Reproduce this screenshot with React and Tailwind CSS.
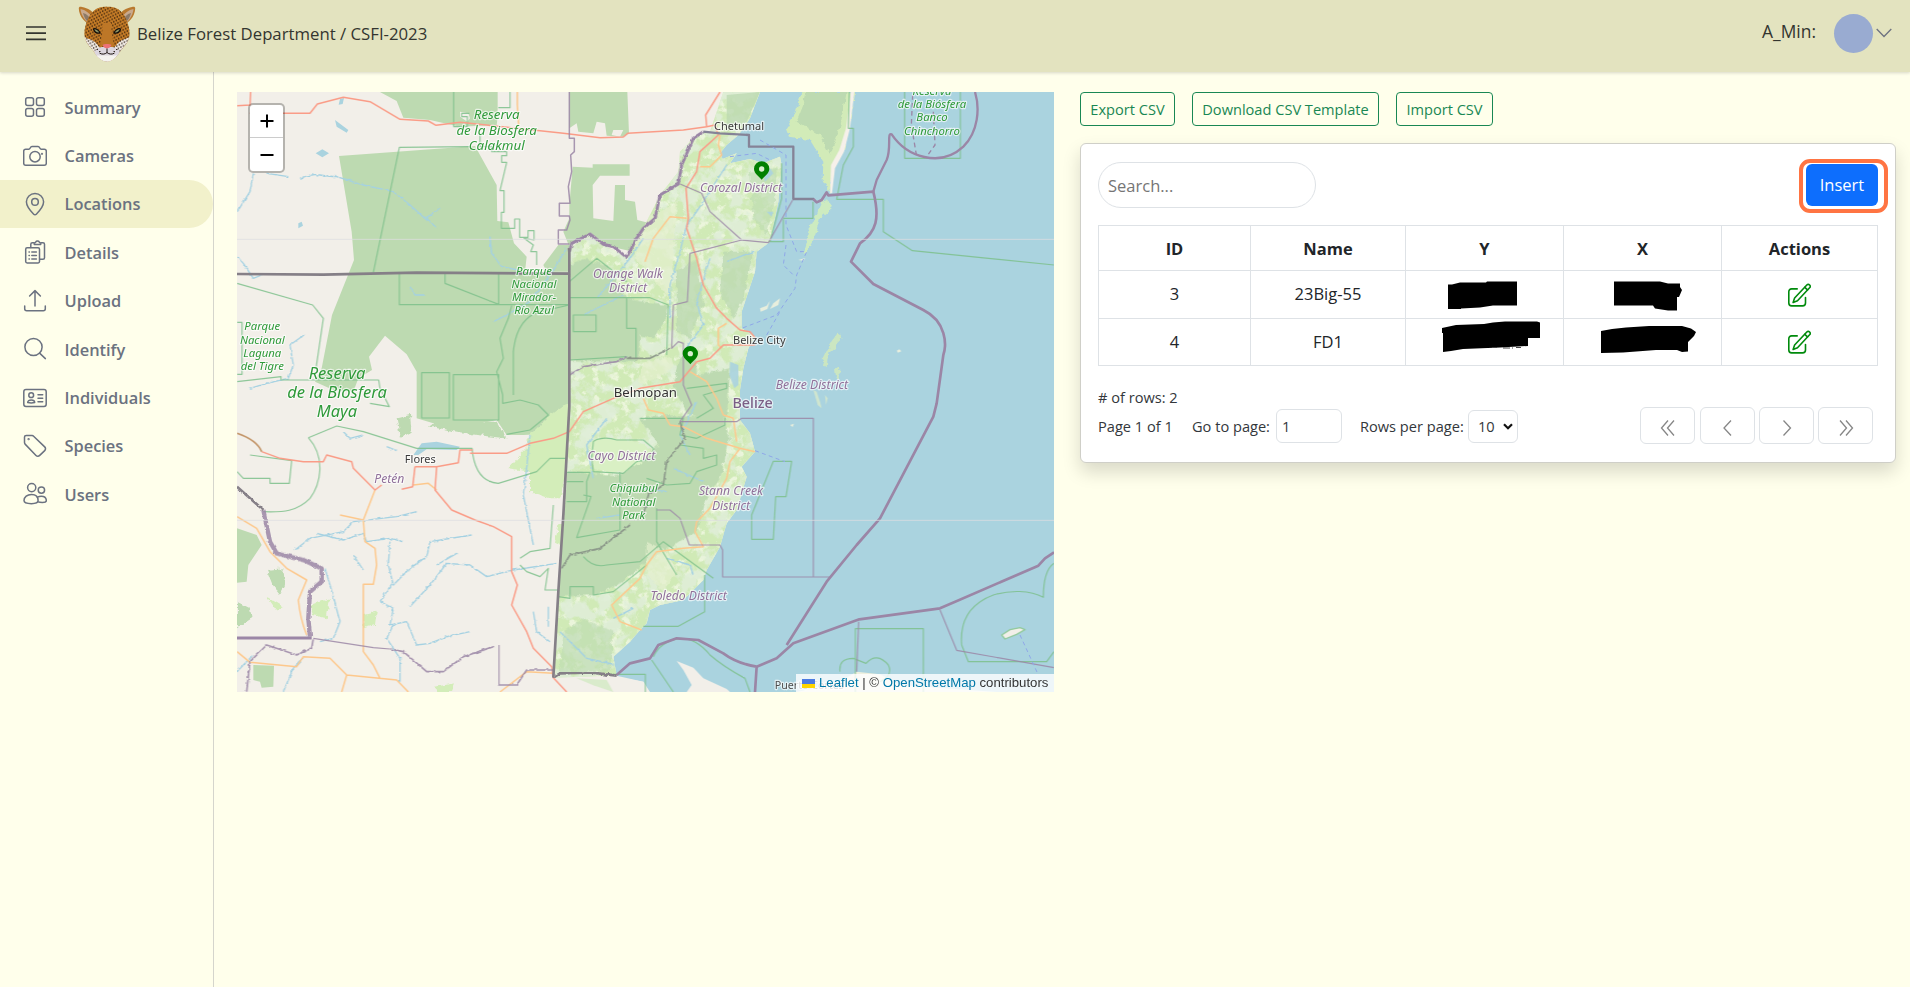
import React from "react";

const OS = "font-['Open_Sans','Noto_Sans',sans-serif]";

/* ---------- icons ---------- */
function Icon({ children, className = "", size = 24, vb = "0 0 24 24", sw = 1.5 }) {
  return (
    <svg className={className} width={size} height={size} viewBox={vb} fill="none" stroke="currentColor" strokeWidth={sw} strokeLinecap="round" strokeLinejoin="round">
      {children}
    </svg>
  );
}

const icons = {
  Summary: (
    <>
      <rect x="2.7" y="2.7" width="7.8" height="7.8" rx="2" />
      <rect x="13.5" y="2.7" width="7.8" height="7.8" rx="2" />
      <rect x="2.7" y="13.5" width="7.8" height="7.8" rx="2" />
      <rect x="13.5" y="13.5" width="7.8" height="7.8" rx="2" />
    </>
  ),
  Cameras: (
    <>
      <path d="M2.7 5.2h3.1c.7 0 1-.4 1.4-1.2C7.700 3 8.200 2.600 9 2.600h6c.8 0 1.300.4 1.800 1.400.4.800.7 1.200 1.400 1.200h3.100c1.100 0 2 .9 2 2v12c0 1.100-.9 2-2 2H2.700c-1.100 0-2-.9-2-2v-12c0-1.100.9-2 2-2z" />
      <circle cx="12" cy="12.700" r="5.200" />
      <circle cx="19" cy="9.800" r=".4" fill="currentColor" />
    </>
  ),
  Locations: (
    <>
      <path d="M12 1.500c-4.800 0-8.600 3.700-8.600 8.300 0 4.300 4.900 10 7.300 12.400.7.700 1.900.7 2.600 0 2.400-2.400 7.300-8.100 7.300-12.400 0-4.600-3.800-8.300-8.600-8.300z" />
      <circle cx="12" cy="9.900" r="3.300" />
    </>
  ),
  Details: (
    <>
      <rect x="2.700" y="7.800" width="13.800" height="15.200" rx="1.400" />
      <path d="M7.800 7.500V4.300c0-.9.6-1.500 1.500-1.500H11M18 2.800h2c.9 0 1.500.6 1.500 1.500v13.400c0 .9-.6 1.500-1.500 1.500h-3.200" />
      <path d="M11.300 4.500V3c.6 0 1.200-.3 1.400-.9.300-.6.900-1 1.800-1s1.500.4 1.800 1c.200.6.8.9 1.400.9v1.500z" />
      <path d="M6 12h.4M8.800 12h4.600M6 15.500h.4M8.800 15.500h4.600M6 19h.4M8.800 19h4.600" />
    </>
  ),
  Upload: (
    <>
      <path d="M12 17V1.800M6.600 7L12 1.600 17.400 7" />
      <path d="M1.700 17v2.700c0 1.200.8 2 2 2h16.600c1.200 0 2-.8 2-2V17" />
    </>
  ),
  Identify: (
    <>
      <circle cx="10.500" cy="10" r="8.600" />
      <path d="M16.600 16.100l5.800 5.500" />
    </>
  ),
  Individuals: (
    <>
      <rect x=".8" y="3.500" width="22.400" height="17" rx="2.200" />
      <circle cx="8.200" cy="9.200" r="2.400" />
      <path d="M4.700 16.600c0-1.700 1.500-2.700 3.500-2.700s3.500 1 3.500 2.700c-2 .5-5 .5-7 0z" />
      <path d="M15 8.700h4.700M15 12.200h4.700M15 15.700h4.700" />
    </>
  ),
  Species: (
    <>
      <path d="M1.500 3v5.600c0 .6.200 1.100.6 1.500l10.900 11.300c1.100 1.100 2.600 1.100 3.700 0l5-4.800c1.100-1.100 1.100-2.600 0-3.700L10.600 2.200c-.4-.4-.9-.6-1.500-.6H3.300c-1 0-1.800.6-1.800 1.400z" />
      <circle cx="5.600" cy="5.200" r=".4" fill="currentColor" />
    </>
  ),
  Users: (
    <>
      <circle cx="8.700" cy="5.600" r="4.100" />
      <path d="M1 18.600c0-3.700 3.300-6.200 7.500-6.200s6.600 2.500 6.600 6.200c0 2.400-2.900 3.100-6.700 3.100S1 21 1 18.600z" />
      <circle cx="18.400" cy="8.100" r="3.200" />
      <path d="M14.400 15.100c1.200-.6 2.400-.9 3.900-.9 3 0 5 1.900 5 4.500 0 1.400-1.700 1.700-4 1.700-1.700 0-3-.1-4.200-.5" />
    </>
  ),
};

const navItems = ["Summary", "Cameras", "Locations", "Details", "Upload", "Identify", "Individuals", "Species", "Users"];

function EditIcon() {
  return (
    <Icon size={24} sw={1.600} className="-translate-x-px text-[#008a0c]">
      <path d="M10.200 5.900H4.600C3 5.900 1.800 7 1.800 8.700v11.400c0 1.700 1.200 2.800 2.800 2.800h11c1.700 0 2.900-1.100 2.900-2.800v-5.500" />
      <path d="M19.800 2c.8-.8 2-.8 2.800 0s.8 2 0 2.800L10.500 17.700 6.100 19.500l1.500-4.500z" />
      <path d="M17.800 4.300l2.700 2.600" />
    </Icon>
  );
}

/* ---------- logo ---------- */
function Jaguar() {
  return (
    <svg width="58" height="56" viewBox="0 0 58 56">
      <defs>
        <pattern id="spots" width="4.400" height="3.800" patternUnits="userSpaceOnUse" patternTransform="rotate(14)">
          <circle cx="1.100" cy=".9" r=".78" fill="#1f1006" />
          <circle cx="3.300" cy="2.800" r=".78" fill="#1f1006" />
        </pattern>
        <clipPath id="face">
          <path d="M12 9C17 2 22 .7 29 .7S41 2 46 9c3 5 6 13 5.500 20-.5 8-6 12-9 16-4 6-8 10.500-13.500 10.500S19 51 15.500 45c-3-4-8.500-8-9-16C6 22 9 14 12 9z" />
        </clipPath>
      </defs>
      <path d="M14 19C8 18 1 11 .8 2.500.7.800 2 .400 4 1c6 1 11 4 13 9z" fill="#b9792e" />
      <path d="M13 19C8 16 3 10 2.500 3c5 1 9 4 11.500 8z" fill="#c9a98d" />
      <path d="M12 18C8 15 6 11 5 7c4 1 7 4 8.500 8z" fill="#8c7a68" />
      <path d="M44 19c6-1 13-8 13.200-16.500C57.300.800 56 .400 54 1c-6 1-11 4-13 9z" fill="#b9792e" />
      <path d="M45 19c5-3 10-9 10.500-16-5 1-9 4-11.500 8z" fill="#c9a98d" />
      <path d="M46 18c4-3 6-7 7-11-4 1-7 4-8.500 8z" fill="#8c7a68" />
      <g clipPath="url(#face)">
        <rect width="58" height="56" fill="#c47b26" />
        <path d="M5 28c2 6 9 4 13 9l5 6-6 13H5zM53 28c-2 6-9 4-13 9l-5 6 6 13h12z" fill="#eee8e2" />
        <rect width="58" height="56" fill="url(#spots)" />
        <path d="M25 17h8l1 12 2 11H22l2-11z" fill="#bd7727" />
        <path d="M16 56l1-11c2-3 5-4 7-4h10c2 0 5 1 7 4l1 11z" fill="#dcd6de" />
        <path d="M17 49.500h24V56H17z" fill="#f5f3f0" />
        <path d="M15.500 23c2-1 5.500 1 6.500 4-3 .5-5.500-.5-6.500-4zM42.500 23c-2-1-5.500 1-6.500 4 3 .5 5.500-.5 6.500-4z" fill="#8c9466" stroke="#17100a" strokeWidth="1.300" />
        <path d="M24.800 38.800c1.500-1 6.900-1 8.400 0 .3 1.800-2.200 3.400-4.200 3.800-2-.4-4.500-2-4.200-3.800z" fill="#ec7278" />
        <path d="M29 42.500v4M21.500 47c2 1.600 5.500 1.500 7.500-.5 2 2 5.500 2.100 7.500.5" stroke="#1d1411" strokeWidth="1" fill="none" />
        <path d="M18.500 43.500h1.500m1 2h1.500m13 0H37m1-2h1.500" stroke="#3a2c25" strokeWidth="1" />
      </g>
    </svg>
  );
}

/* ---------- map ---------- */
const NORTH_LAND =
  "M1590 21L1560 100 1540 130 1525 150 1490 180 1470 205 1478 222 1520 205 1500 235 1560 222 1600 235 1650 215 1655 240 1645 350 1620 470 1580 500 1575 560 1555 620 1535 680 1535 730 1575 755 1555 790 1540 850 1530 915 1530 1005 1560 1045 1575 1100 1535 1145 1550 1175 1520 1275 1490 1315 1470 1385 1430 1455 1420 1485 1360 1545 1290 1560 1260 1575 1250 1615 1230 1635 1200 1670 1150 1715 1160 1772";

function Label({ lines, x, y, size = 40, lh = 40, fill, w = 400, italic = true, halo = "#ffffff" }) {
  return (
    <text x={x} y={y} fontSize={size} fill={fill} fontWeight={w} fontStyle={italic ? "italic" : "normal"} textAnchor="middle" stroke={halo} strokeOpacity=".65" strokeWidth="7" strokeLinejoin="round" paintOrder="stroke">
      {lines.map((l, i) => (
        <tspan key={l} x={x} dy={i ? lh : 0}>{l}</tspan>
      ))}
    </text>
  );
}

function Pin({ x, y }) {
  return (
    <g transform={`translate(${x} ${y})`}>
      <path d="M0 0C-8-10-23-19-23-33a23 22 0 0 1 46 0C23-19 8-10 0 0z" fill="#008000" />
      <circle cy="-32" r="8" fill="#d9efd0" />
    </g>
  );
}

function MapArt() {
  const road = "#fa9c87";
  const minor = "#fdc88c";
  const park = "#7dc08b";
  const border = "#9b86a6";
  const river = "#a4d1e2";
  const green = "#2f9a3a";
  const purple = "#90709a";
  return (
    <svg className="block h-[600px] w-[817px]" viewBox="21 21 2451 1800" fill="none" strokeLinejoin="round" fontFamily="'Noto Sans', 'Open Sans', sans-serif">
      <defs>
        <filter id="mottle" x="0" y="0" width="100%" height="100%">
          <feTurbulence type="fractalNoise" baseFrequency=".035" numOctaves="5" seed="8" />
          <feColorMatrix values="0 0 0 0 .93  0 0 0 0 .96  0 0 0 0 .83  6 0 0 0 -3.200" />
        </filter>
        <filter id="mottle2" x="0" y="0" width="100%" height="100%">
          <feTurbulence type="fractalNoise" baseFrequency=".02" numOctaves="6" seed="21" />
          <feColorMatrix values="0 0 0 0 .74  0 0 0 0 .855  0 0 0 0 .69  6 0 0 0 -2.700" />
        </filter>
        <filter id="wig" x="-5%" y="-5%" width="110%" height="110%">
          <feTurbulence type="fractalNoise" baseFrequency=".09" numOctaves="2" seed="3" result="n" />
          <feDisplacementMap in="SourceGraphic" in2="n" scale="9" xChannelSelector="R" yChannelSelector="G" />
        </filter>
        <filter id="rough" x="-5%" y="-5%" width="110%" height="110%">
          <feTurbulence type="fractalNoise" baseFrequency=".06" numOctaves="3" seed="5" result="n" />
          <feDisplacementMap in="SourceGraphic" in2="n" scale="16" xChannelSelector="R" yChannelSelector="G" />
        </filter>
        <clipPath id="belize">
          <path d={NORTH_LAND + "L1130 1772 970 1778 985 1500 1000 1270 1018 1010 1018 490 1080 450 1120 480 1190 515 1240 430 1290 330 1345 260 1350 200 1400 150 1440 140 1480 21z"} />
        </clipPath>
      </defs>

      <rect x="21" y="21" width="2451" height="1800" fill="#f2efe9" />
      <path d={NORTH_LAND + "L1240 1790 1260 1821H2472V21z"} fill="#aad3df" />

      {/* protected areas, Mexico and Guatemala */}
      <g fill="#bddab1">
        <path d="M450 21H803V95L800 120 690 125 600 105 520 98 500 48z" />
        <path d="M327 213L735 183 800 300 802 408 835 412 852 475 890 515 885 560 1018 562V1020L1000 1015 980 1045 880 1050 830 1050 800 1005 740 1018 620 1018 560 1000V860L530 808 465 752 417 815 426 855 385 880 370 920 310 915 255 890 275 850 306 690 372 525 365 440z" />
        <path d="M1018 21H1192L1197 145 1180 155 1130 152 1125 115 1100 110 1090 145 1045 140 1040 115 1018 130z" />
        <path d="M1028 245L1088 248V238H1199V272H1110L1088 300 1090 400 1150 408 1155 300 1185 300V345L1215 350 1222 405 1260 415 1210 500 1120 480 1085 445 1018 485 1000 440 1018 400 1018 360z" />
        <path d="M940 540L985 480 1018 480V560H950z" />
        <path d="M21 1330L80 1350 95 1380 55 1440 50 1490 21 1493z" />
        <path d="M70 1740L132 1742 130 1805 95 1808 90 1790 70 1785z" />
      </g>
      <path d="M690 95V80L715 85 720 100 712 110zM1150 135l30 0-10 20-25-5z" fill="#f2efe9" />
      <g filter="url(#rough)">
        <path d="M110 1455L160 1450 165 1500 150 1530 130 1505zM21 1550L60 1570 65 1600 21 1630zM500 1000L540 990 545 1040 510 1060zM620 1010L800 1010 830 1060 740 1050 600 1025z" fill="#bddab1" />
        <path d="M1015 950L1018 1140 990 1240 960 1240 900 1220 900 1160 835 1150 890 1090 890 1060 960 990z" fill="#d3edb9" />
        <path d="M985 1320l15 0-5 60-20-10zM110 1535l50 30-20 12zM240 1560l60-20-10 60-40-10zM400 1590l40-10-5 40-35 10zM615 1805l60-10-10 26h-40z" fill="#d3edb9" />
      </g>

      {/* Belize land cover */}
      <g clipPath="url(#belize)">
        <rect x="960" y="21" width="720" height="1780" fill="#d0eab6" />
        <rect x="960" y="21" width="720" height="1780" filter="url(#mottle)" opacity=".7" />
        <rect x="960" y="21" width="720" height="1780" filter="url(#mottle2)" opacity=".9" />
        <g fill="#bddab1" filter="url(#rough)">
          <path d="M1018 540L1060 520 1130 540 1190 640 1260 655 1315 660 1310 700 1270 760 1230 750 1225 830 1010 830z" />
          <path d="M1010 1160L1080 1165 1160 1170 1230 1130 1285 1080 1230 1000 1300 990 1480 1000 1500 1060 1470 1180 1430 1240 1400 1340 1350 1370 1300 1400 1250 1430 1180 1490 1100 1530 980 1535z" />
          <path d="M1400 870L1500 850 1490 1000 1430 1010 1370 985 1330 900 1350 820 1395 790z" />
          <path d="M1480 500L1570 500 1540 640 1510 700 1470 620z" opacity=".8" />
          <path d="M1560 260L1640 250 1635 350 1610 450 1570 400z" opacity=".6" />
          <path d="M1340 560L1400 520 1420 660 1380 760 1340 740z" opacity=".8" />
          <path d="M1000 1640L1060 1600 1150 1640 1140 1760 990 1765z" opacity=".6" />
        </g>
        <path d="M1490 30L1590 21 1550 110 1490 140z" fill="#bddab1" opacity=".8" />
        <g filter="url(#rough)">
          <path d="M1080 1070C1120 1050 1220 1060 1265 1095L1235 1135 1160 1165 1090 1155z" fill="#d9f0c4" />
          <path d="M1240 830l85-15 5 30-45 35-60 15zM1250 1370l60 30 30 60-40 60-50-50zM1200 400l20 130 100 110 10-130 10-160-60 40z" fill="#e4efcd" opacity=".7" />
        </g>
      </g>

      {/* Yucatan peninsula and cayes */}
      <g filter="url(#rough)">
        <path d="M1715 21H1872L1858 130 1840 200 1810 250 1800 325 1790 300 1778 290 1780 230 1740 165 1680 155 1670 130 1695 85z" fill="#d2ebb8" />
        <path d="M1730 21L1720 60 1700 110 1770 150 1800 210 1830 130 1850 21z" fill="#bddab1" />
        <path d="M1790 345L1808 370 1770 400 1750 465 1725 510 1720 500 1740 430 1778 350z" fill="#cdebc0" />
        <path d="M1825 740l10 15-15 30-25 20-5 40-15-20 15-30zM1815 850l12-5 3 35-12-3z" fill="#cbe6c1" />
      </g>
      <path d="M1862 21L1848 130 1828 195 1803 240 1800 325 1806 325 1815 250 1842 200 1860 130 1873 21z" fill="#f6f0ea" />
      <path d="M1630 655l20-15-5 20-25 12zM1590 670l20-8 10-15-8 25-20 8zM2000 797l8-4 6 6-10 4zM1705 525l20-6-5 8zM1680 1020l12-4-4 10z" fill="#e8eedd" />
      <path d="M1750 915l10 5 10 30 5 20-12-10zM1785 930l8 10-5 20z" fill="#cfe5cf" />
      <path d="M2315 1650L2340 1634 2370 1628 2385 1634 2360 1648 2325 1662z" fill="#f2efe9" stroke="#92ca9d" strokeWidth="4" />

      {/* Honduras coast */}
      <path d="M1340 1728L1390 1748 1420 1780 1490 1812 1500 1821H1370L1385 1800 1360 1755z" fill="#f2efe9" />
      <path d="M1700 1821L1830 1790 1880 1760 1950 1768 2010 1800 2300 1821z" fill="#eef0df" />
      <path d="M970 1780L1130 1775 1160 1776 1240 1790 1255 1821H1010z" fill="#f2efe9" />
      <path d="M1040 1780l90 5 20 36-60-20z" fill="#cfe9bd" opacity=".7" />

      {/* lakes and lagoons */}
      <g fill="#aad3df">
        <path d="M550 1110L575 1075 620 1070 690 1085 680 1095 590 1093 565 1110z" />
        <path d="M315 105l40 30-5 8-30-18zM330 42l12-3-4 18-12 2zM257 205l20-12 20 12-20 12zM205 415l10-5 4 12-14 8z" />
        <path d="M1500 830l25 10v60l-12 10-15-40zM1600 270l20-20 10 15-25 25zM1610 380l20 0-5 15z" opacity=".9" />
      </g>

      {/* rivers */}
      <g stroke={river} strokeWidth="4" filter="url(#wig)">
        <path d="M210 280Q240 265 270 270T320 275L400 300 490 320 540 360 590 405M590 400L630 368M110 265l65 10M70 265L60 320 22 380M22 515L40 535 70 580 95 570M222 750L180 780 190 840 175 880 110 895 60 910" />
        <path d="M590 400l30 30M780 455l5 50 30 40 50 10M1010 490l-50 80-60 80-70 40-40 20M540 605l15 25 30 0" />
        <path d="M195 1395L240 1360 340 1340 370 1310 500 1295 560 1280M260 1345l80 20 60-20 10 25 70-10 40 10M725 1350L600 1370 590 1415 540 1450 490 1500 475 1440 480 1370M490 1490L450 1550 490 1570 480 1620 530 1610 560 1680 600 1675 650 1655 720 1640" />
        <path d="M540 1565L600 1500 650 1435 720 1440 770 1475 850 1455 980 1435M620 1440l60-35M285 1450L300 1500 330 1610 310 1660 270 1670M900 1050L890 1150 880 1230 910 1380M490 1620L470 1660 510 1720 510 1790M910 1580l10 60 40 30M955 1565v60M160 1820l30-70 30-30" />
        <path d="M1490 240L1400 380 1370 420 1350 500 1320 600 1320 700M1570 500L1490 530M1440 520l-40 130 20 70-60 80M1100 640l100-120 40-60M1060 690l120-60M1130 1000l-60 80 20 100M1400 950l-50 100 30 60M1330 1150l90 40M1310 1420l70 20 10 30M1230 1210l80 10M1100 1300l70-10M990 1640l80 80 90 20M1150 1600l60-30" />
        <path d="M20 1760l50-50M340 1040l20 20 40-10M470 1085l30 12M370 1410l30 45" />
      </g>

      {/* park outlines */}
      <g stroke={park} strokeWidth="3.500" opacity=".85">
        <path d="M430 562L508 187 720 185M671 21V125H712V95H695V85H718M840 21V68H805M750 150v35h35v15h45v12h-15v20h15l-20 85h12v65h-8v48h40v-28h15v55h25v-20h18v28l-30-5 28 20-8 20h18v40" />
        <path d="M508 565V659H1018M645 565V595L806 658V565M575 863H658V999H575zM670 869H806V1005H670zM806 1005V925M850 930V800Q860 700 930 680L1018 660M845 662L835 700 810 760 820 820 800 860 818 930V955L870 945 925 960 955 990 900 1035 830 1048" />
        <path d="M21 595L248 660 280 700 258 850M21 712H36V868H21M21 890L153 875V885H446L450 910 478 965 420 955M235 1058L320 1023 400 1040 560 1090H726Q735 1190 805 1195L920 1160 960 1120 1010 1120M235 1058C290 1120 270 1200 240 1240 200 1280 160 1282 100 1280M60 1110L185 1127 178 1195H120V1180H40L21 1160" />
        <path d="M1018 590L1100 520 1190 590M1018 638H1190V730H1218V820M1030 690H1098V740H1030zM1190 638H1260L1315 660 1310 810M1018 825L1190 815M1090 1070C1100 1060 1130 1055 1160 1065L1240 1065 1270 1090 1270 1120 1220 1130 1180 1165 1090 1160 1085 1120zM1010 1162H1080L1070 1190V1250H1010M1010 1190H1060M1170 1162V1335L1040 1358 1083 1235 1060 1230M1060 1415Q1090 1450 1130 1440L1230 1430 1300 1370 1450 1480" />
        <path d="M1230 1000H1360L1350 1050 1400 1060 1485 1020V1000M1350 1080L1420 1090 1420 1120 1460 1110V1140L1400 1160 1380 1195 1310 1200 1250 1180M1280 1270V1370L1340 1470M985 1535L1020 1540V1505H1090V1530L1150 1520 1200 1480 1250 1440M870 1440L890 1460 930 1475 955 1450 945 1515H985M870 1420L900 1400 960 1390 970 1260M1370 910L1490 895V910L1420 930 1450 970 1400 1000" />
        <path d="M1858 21L1855 130H1870V185L1840 240 1820 343H1960V440L2047 497 2472 540M1660 400H1749V350M1660 403V470H1615M1655 235V340L1620 470M2024 21V220H2191V21" />
        <path d="M1630 1129H1685L1668 1235H1637L1630 1363H1565V1290zM1424 1470V1580L1345 1624H1240M1876 1821V1631H2080V1821M1830 1760Q1825 1720 1870 1720L1908 1735Q1940 1700 1975 1740 1990 1770 1950 1790" />
        <path d="M2472 1435C2450 1450 2440 1490 2440 1537 2400 1515 2340 1515 2290 1530 2210 1560 2190 1620 2195 1680L2215 1730H2450L2472 1700M1270 1715Q1290 1670 1350 1660 1400 1660 1440 1710 1480 1745 1545 1780L1560 1821M1265 1725L1330 1821M1130 1768H1246V1821" />
      </g>

      {/* roads */}
      <g stroke={minor} strokeWidth="4.500">
        <path d="M862 21V60L866 120M21 1295L80 1330 120 1400 170 1450 230 1485 205 1545Q210 1600 230 1650M435 1215L400 1305 330 1290M400 1305L405 1370 435 1390 440 1440 430 1498H400V1700L430 1740 450 1780M550 1200L595 1195 620 1215M60 1732L200 1745 220 1715 300 1720 350 1770 500 1785 535 1821M350 1770L335 1821M21 1700L60 1732M810 1821L890 1760 970 1765" />
        <path d="M1470 150L1465 180 1475 210 1440 245 1410 245M1370 400L1320 395 1270 460 1245 530M1380 860L1430 890 1460 940 1480 990M1490 715L1465 730 1465 780 1475 790M1240 940L1255 975 1300 985 1320 1020 1360 1025 1430 1060 1530 1090 1575 1100M1530 1090L1500 1130 1490 1180 1440 1270 1400 1310 1395 1340 1420 1385 1360 1390 1280 1400 1250 1440 1230 1480 1145 1560 1170 1610 1235 1635M1510 1000L1520 1070M1480 990L1510 1000" />
      </g>
      <g stroke={road} strokeWidth="4.500">
        <path d="M62 21L60 60 21 62M60 85H240L262 57 340 37 420 50 510 103 595 108 618 121 690 112 770 120 1000 145 1110 158 1180 156 1193 145 1360 135 1430 125 1427 90 1470 21M1430 125L1455 120 1465 150 1410 200 1400 260 1368 310 1375 400 1370 430 1400 520 1420 600 1460 670 1490 700 1530 735 1560 740 1575 758M1575 780H1480L1440 820 1400 830 1350 890 1230 910 1150 940 1060 980 1018 1040 970 1060 900 1075 830 1105 720 1105" />
        <path d="M95 1100L150 1120 220 1130 280 1130 290 1110 365 1130 370 1150 435 1215 455 1200M515 1213L548 1205 555 1145M620 1145L685 1133 690 1095 728 1095M555 1145H620L615 1215 665 1275 735 1305 790 1325 845 1355 845 1460 862 1500 845 1560 890 1640 910 1690 965 1745 970 1778 1010 1821" />
      </g>
      <path d="M21 1045Q80 1065 95 1100" stroke="#c29467" strokeWidth="5" />

      {/* administrative boundaries */}
      <g stroke={border}>
        <g strokeWidth="3.500" opacity=".85">
          <path d="M1350 297L1415 325 1440 380 1535 465 1615 473 1688 345M1535 465L1380 505 1372 650 1330 660 1325 790 1345 770 1360 775V900L1385 960 1350 1010H1520L1535 1000H1750V1476M1280 1275L1320 1275 1350 1300 1378 1380H1470L1478 1395V1476H1800M1886 1610L1880 1760M2130 1575L2180 1696 2472 1748M807 1680V1800M250 1660L430 1688 480 1692" />
        </g>
        <g strokeWidth="5" opacity=".85" filter="url(#wig)">
          <path d="M1018 870L1060 845 1160 830 1190 815" />
          <path d="M480 1692L520 1700 590 1760 640 1760 700 1715 790 1685M807 1800L860 1800 890 1755 970 1755M50 1820L60 1730 110 1680 200 1710 245 1690 250 1660" />
          <path d="M995 1450L1020 1410 1110 1390 1200 1320" stroke="#848d84" />
          <path d="M1350 1010L1365 1060 1310 1130 1300 1200 1255 1230 1240 1290M1190 820L1260 820 1320 790" stroke="#848d84" />
        </g>
        <g strokeWidth="9" filter="url(#wig)">
          <path d="M1018 500L1025 475 1080 447 1120 478 1150 485 1190 517 1220 460 1240 430 1275 400 1290 330 1345 297 1355 240 1390 160 1420 140" />
          <path d="M100 1275L120 1370 140 1405 220 1425 275 1450 275 1490 240 1520 235 1600 240 1655" strokeWidth="13" opacity=".85" />
        </g>
        <path d="M1018 21V160H1033V200L1022 210 1025 260 1015 305 1020 355H988V393H1018L1020 405 1010 435H985V477H1018" strokeWidth="4.500" opacity=".85" />
        <path d="M21 1659H245" strokeWidth="9" />
        <path d="M1420 140L1470 145 1557 150V185H1690V342H1752" strokeWidth="7" stroke="#858397" />
        <path d="M1750 342L1760 352 1775 345 1790 322 1795 331 1930 320C1950 400 1940 440 1890 475L1863 530 1930 597 2080 675C2150 710 2150 780 2140 810L2120 955 2110 995 1950 1300 1880 1380 1790 1490 1670 1680" strokeWidth="8" />
        <path d="M1930 320L1940 285 1970 225C1985 190 1970 140 1985 148 2030 215 2130 250 2200 185 2245 140 2250 70 2235 21" strokeWidth="7" />
        <path d="M2472 1402L2445 1420 2425 1442 2130 1570 1888 1603 1690 1675 1640 1720 1580 1745Q1520 1735 1480 1705L1405 1665 1340 1660 1285 1680 1260 1720 1200 1735 1160 1770M1580 1745L1575 1821" strokeWidth="8" />
        <path d="M2048 30L2044 120 2060 215M2110 80L2115 180 2090 215" strokeWidth="4" strokeDasharray="14 10" />
      </g>
      <g stroke="#857f87">
        <path d="M21 567L280 569 560 563 1018 566M1018 490V965L1000 1290 985 1520 970 1778" strokeWidth="8" />
        <path d="M970 1778L990 1765 1080 1762 1160 1772" strokeWidth="8" filter="url(#wig)" />
        <path d="M21 1205L100 1275" strokeWidth="8" filter="url(#wig)" />
      </g>
      <path d="M1500 215L1580 205 1620 225M1590 165L1668 210 1668 420 1700 500 1730 500 1700 570 1695 610 1640 690 1535 730M1668 480L1660 540 1690 570M1610 750L1650 680M1575 1097L1665 1130M2370 1650L2425 1770" stroke="#8fa7e8" strokeWidth="3" strokeDasharray="12 10" />

      <path d="M21 463H2472M21 1306H2472" stroke="#dcdce0" strokeWidth="3" opacity=".75" />

      {/* labels */}
      <Label lines={["Reserva", "de la Biosfera", "Calakmul"]} x={800} y={102} size={40} lh={47} fill={green} />
      <Label lines={["Parque", "Nacional", "Mirador-", "Río Azul"]} x={912} y={569} size={34} lh={39.500} fill={green} />
      <Label lines={["Parque", "Nacional", "Laguna", "del Tigre"]} x={97} y={736} size={34} lh={39.500} fill={green} />
      <Label lines={["Reserva", "de la Biosfera", "Maya"]} x={321} y={881} size={49.500} lh={58} fill={green} />
      <Label lines={["Reserva", "de la Biósfera", "Banco", "Chinchorro"]} x={2106} y={30} size={34} lh={39.500} fill={green} />
      <Label lines={["Chiquibul", "National", "Park"]} x={1211} y={1222} size={34} lh={39.500} fill={green} />
      <Label lines={["Orange Walk", "District"]} x={1194} y={578} size={36.500} lh={44} fill={purple} />
      <Label lines={["Corozal District"]} x={1533} y={320} size={36.500} fill={purple} />
      <Label lines={["Belize District"]} x={1746} y={911} size={36.500} fill={purple} />
      <Label lines={["Cayo District"]} x={1174} y={1125} size={36.500} fill={purple} />
      <Label lines={["Petén"]} x={478} y={1195} size={36.500} fill={purple} />
      <Label lines={["Stann Creek", "District"]} x={1503} y={1230} size={36.500} lh={44} fill={purple} />
      <Label lines={["Toledo District"]} x={1376} y={1545} size={36.500} fill={purple} />
      <Label lines={["Belize"]} x={1568} y={968} size={43} fill="#7b5f86" w={500} italic={false} />
      <Label lines={["Chetumal"]} x={1527} y={136} size={33} fill="#3b3b3b" italic={false} />
      <Label lines={["Belize City"]} x={1588} y={777} size={33} fill="#3b3b3b" italic={false} />
      <Label lines={["Flores"]} x={571} y={1135} size={33} fill="#3b3b3b" italic={false} />
      <Label lines={["Belmopan"]} x={1246} y={936} size={39.500} fill="#333333" italic={false} />
      <Label lines={["Puerto Cortés"]} x={1738} y={1811} size={32} fill="#4d4d4d" italic={false} />

      <Pin x={1595} y={284} />
      <Pin x={1381} y={838} />
    </svg>
  );
}

function MapPanel() {
  return (
    <section className="relative h-[600px] w-[817px] shrink-0 overflow-hidden">
      <MapArt />
      <div className="absolute left-[11px] top-[11px] w-[37px] overflow-hidden rounded-[5px] border-2 border-black/25 bg-white bg-clip-padding text-black">
        <button className="flex h-[33px] w-full items-center justify-center border-b border-[#cccccc]" aria-label="Zoom in">
          <svg width="14" height="14" viewBox="0 0 14 14"><path d="M7 .5v13M.5 7h13" stroke="#000" strokeWidth="2" /></svg>
        </button>
        <button className="flex h-[33px] w-full items-center justify-center" aria-label="Zoom out">
          <svg width="14" height="14" viewBox="0 0 14 14"><path d="M.5 7h13" stroke="#000" strokeWidth="2" /></svg>
        </button>
      </div>
      <div className="absolute bottom-0 right-0 flex h-[18px] w-[258px] items-center whitespace-nowrap bg-white/80 pl-[6px] font-['Liberation_Sans',Arial,sans-serif] text-[13.200px] leading-none text-[#333333]">
        <span className="mr-[4px] flex h-[9px] w-[13px] flex-col">
          <span className="h-[5px] bg-[#4c7be1]" />
          <span className="h-[4px] bg-[#ffd500]" />
        </span>
        <span className="text-[#0078a8]">Leaflet</span>
        <span className="whitespace-pre"> | © </span>
        <span className="text-[#0078a8]">OpenStreetMap</span>
        <span className="whitespace-pre"> contributors</span>
      </div>
    </section>
  );
}

/* ---------- table ---------- */
function Redaction({ vb, d, children }) {
  return (
    <svg className="absolute inset-0 h-full w-full" viewBox={vb} preserveAspectRatio="none">
      <path d={d} fill="#000" />
      {children}
    </svg>
  );
}

const rows = [
  {
    id: "3", name: "23Big-55",
    y: { vb: "1406 271 157 47", d: "M1448 284.500L1452 284.500 1460 282.500 1486 282.500 1487 281.500H1517V305.500H1493L1480 307.500 1461 308.500V309H1448z" },
    x: { vb: "1564 271 157 47", d: "M1614 281.500H1660L1668 283.500H1680L1680 287 1682 290 1679 297V297H1677V310.500H1668L1655 308.500 1653 305.500H1614z" },
  },
  {
    id: "4", name: "FD1",
    y: { vb: "1406 319 157 46", d: "M1442 328L1456 325 1484 324 1493 322.500 1505 321.500H1537L1540 322.500V338H1528V346L1500 347.500 1463 349 1451 351 1443 352V333H1442z" },
    x: { vb: "1564 319 157 46", d: "M1601 331L1612 329 1626 327.500 1649 326H1682L1691 328.500 1696 332 1694 336 1688 342V351.500L1682 352 1677 350H1656L1623 352.500 1601 353z" },
  },
];

function DataTable() {
  const th = "border-b border-r border-[#dee2e6] flex items-center justify-center pt-[2px] font-bold";
  const td = "relative border-b border-r border-[#dee2e6] flex items-center justify-center";
  return (
    <div className="mt-[17px] grid w-[780px] grid-cols-[152px_155px_158px_158px_156px] grid-rows-[45px_48px_47px] border-l border-t border-[#dee2e6] text-[16.500px] text-[#212529]">
      {["ID", "Name", "Y", "X", "Actions"].map((h) => (
        <div key={h} className={th}>{h}</div>
      ))}
      {rows.map((r) => (
        <React.Fragment key={r.id}>
          <div className={td}>{r.id}</div>
          <div className={td}>{r.name}</div>
          <div className={td}>
            <Redaction {...r.y}>
              {r.id === "4" && <path d="M1492 347.500h5M1503 348h7M1512 348h1M1516 347.500h5" stroke="#444" strokeWidth="1" />}
            </Redaction>
          </div>
          <div className={td}><Redaction {...r.x} /></div>
          <div className={td}><EditIcon /></div>
        </React.Fragment>
      ))}
    </div>
  );
}

function PagerButton({ d, className = "" }) {
  return (
    <button className={"flex h-[37px] w-[55px] items-center justify-center rounded-[6px] border border-[#dee2e6] bg-white pt-[4px] " + className}>
      <svg width="18" height="18" viewBox="0 0 18 18" fill="none" stroke="#868686" strokeWidth="1.300"><path d={d} /></svg>
    </button>
  );
}

function Card() {
  return (
    <div className="mt-[17px] h-[320px] w-[816px] rounded-[6px] border border-[#cfcfc8] bg-white pl-[17px] pt-[18px] shadow-[0_9px_18px_rgba(0,0,0,0.15)]">
      <div className="flex w-[780px] items-start justify-between">
        <input placeholder="Search..." className="h-[46px] w-[218px] rounded-full border border-[#dee2e6] bg-white px-[9px] text-[16.500px] placeholder:text-[#757575]" />
        <div className="relative mt-[2px]">
          <button className="h-[42px] w-[72px] rounded-[6px] bg-[#0d6efd] pt-px text-[16.500px] text-white">Insert</button>
          <span className="absolute -left-[7px] -top-[5px] h-[54px] w-[89px] rounded-[11px] border-4 border-[#ff7442]" />
        </div>
      </div>
      <DataTable />
      <div className="mt-[20px] w-[780px] text-[14.600px] leading-[22px] text-[#33373b]">
        <div># of rows: 2</div>
        <div className="-mt-px flex h-[37px] items-start justify-between">
          <div className="mt-[2px] flex items-center">
            <span className="w-[94px] whitespace-nowrap">Page 1 of 1</span>
            <span className="w-[84px] whitespace-nowrap">Go to page:</span>
            <span className="flex h-[34px] w-[66px] items-center rounded-[6px] border border-[#dee2e6] pl-[5px]">1</span>
            <span className="ml-[18px] w-[108px] whitespace-nowrap">Rows per page:</span>
            <span className="flex h-[33px] w-[50px] items-center rounded-[6px] border border-[#dee2e6] pl-[9px]">
              10
              <svg className="ml-[8px]" width="10" height="7" viewBox="0 0 10 7" fill="none"><path d="M1 1.200l4 4 4-4" stroke="#111" strokeWidth="2.200" /></svg>
            </span>
          </div>
          <div className="mr-[5px] flex">
            <PagerButton d="M9 1.500L2.500 9 9 16.500M15 1.500L8.500 9 15 16.500" />
            <PagerButton className="ml-[5px]" d="M12 1.500L5 9l7 7.500" />
            <PagerButton className="ml-[4px]" d="M5.500 1.500l7 7.500-7 7.500" />
            <PagerButton className="ml-[4px]" d="M3 1.500L9.500 9 3 16.500M9 1.500L15.500 9 9 16.500" />
          </div>
        </div>
      </div>
    </div>
  );
}

function OutlineButton({ children, className }) {
  return (
    <button className={"h-[34px] whitespace-nowrap rounded-[4px] border border-[#198754] pt-px text-[14.600px] text-[#198754] " + className}>{children}</button>
  );
}

export default function App() {
  return (
    <div className={"flex h-[987px] w-[1910px] flex-col overflow-hidden bg-[#ffffeb] " + OS}>
      <header className="z-10 flex h-[72px] shrink-0 items-start bg-[#e3e3bf] shadow-[0_1px_3px_rgba(0,0,0,0.16)]">
        <svg className="ml-[26px] mt-[25px]" width="20" height="16" viewBox="0 0 20 16" stroke="#33352f" strokeWidth="1.700"><path d="M0 2h20M0 8.200h20M0 14.400h20" /></svg>
        <div className="ml-[32px] mt-[6px]"><Jaguar /></div>
        <div className="ml-[1px] mt-[22px] whitespace-nowrap text-[16.750px] leading-[24px] text-[#33352f]">Belize Forest Department / CSFI-2023</div>
        <div className="ml-auto mt-[19px] whitespace-nowrap text-[17.400px] font-medium leading-[24px] text-[#33352f]">A_Min:</div>
        <div className="ml-[18px] mt-[14px] h-[39px] w-[39px] rounded-full bg-[#99abd1]" />
        <svg className="ml-[3px] mr-[18px] mt-[28px]" width="16" height="10" viewBox="0 0 16 10" fill="none" stroke="#6d7280" strokeWidth="1.300"><path d="M.7 1l7.300 7.500L15.300 1" /></svg>
      </header>
      <div className="flex min-h-0 flex-1">
        <aside className="w-[214px] shrink-0 border-r border-[#d5d5cc] pt-[11px]">
          {navItems.map((n) => (
            <div key={n} className={"flex h-[48.400px] items-center rounded-r-full pl-[23px] text-[16.400px] font-semibold text-[#6b7280] " + (n === "Locations" ? "bg-[#f2f1cb]" : "")}>
              <Icon>{icons[n]}</Icon>
              <span className="ml-[17.500px] mt-px leading-[24px]">{n}</span>
            </div>
          ))}
        </aside>
        <main className="flex pl-[23px] pt-[20px]">
          <MapPanel />
          <section className="ml-[26px]">
            <div className="flex">
              <OutlineButton className="w-[95px]">Export CSV</OutlineButton>
              <OutlineButton className="ml-[17px] w-[187px]">Download CSV Template</OutlineButton>
              <OutlineButton className="ml-[17px] w-[97px]">Import CSV</OutlineButton>
            </div>
            <Card />
          </section>
        </main>
      </div>
    </div>
  );
}
